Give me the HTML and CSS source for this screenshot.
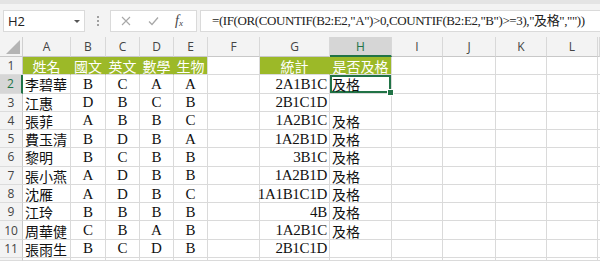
FILE: index.html
```html
<!DOCTYPE html>
<html lang="zh-Hant">
<head>
    <meta charset="UTF-8">
    <title>成績統計</title>
    <link rel="stylesheet" href="styles.css">
</head>
<body>
    <div class="top-band"></div>
    <div class="formula-bar">
        <div class="name-box">
            <span>H2</span>
            <span class="caret"></span>
        </div>
        <div class="grip"><i></i><i></i><i></i></div>
        <div class="fx-box">
            <svg class="fx-icon" width="10" height="10" viewBox="0 0 10 10">
                <path d="M1 1 L9 9 M9 1 L1 9" stroke="#a8a8a8" stroke-width="1.1" fill="none"/>
            </svg>
            <svg class="fx-icon" width="11" height="10" viewBox="0 0 11 10">
                <path d="M1 5.5 L4 8.5 L10 1.5" stroke="#a8a8a8" stroke-width="1.3" fill="none"/>
            </svg>
            <span class="fx">f<sub>x</sub></span>
        </div>
        <div class="formula">=(IF(OR(COUNTIF(B2:E2,"A")&gt;0,COUNTIF(B2:E2,"B")&gt;=3),"及格",""))</div>
    </div>

    <div id="sheet" class="sheet"></div>

    <script>
        const letters = ['A', 'B', 'C', 'D', 'E', 'F', 'G', 'H', 'I', 'J', 'K', 'L', ''];

        const rows = [
            ['姓名', '國文', '英文', '數學', '生物', '', '統計', '是否及格'],
            ['李碧華', 'B', 'C', 'A', 'A', '', '2A1B1C', '及格'],
            ['江惠', 'D', 'B', 'C', 'B', '', '2B1C1D', ''],
            ['張菲', 'A', 'B', 'B', 'C', '', '1A2B1C', '及格'],
            ['費玉清', 'B', 'D', 'B', 'A', '', '1A2B1D', '及格'],
            ['黎明', 'B', 'C', 'B', 'B', '', '3B1C', '及格'],
            ['張小燕', 'A', 'D', 'B', 'B', '', '1A2B1D', '及格'],
            ['沈雁', 'A', 'D', 'B', 'C', '', '1A1B1C1D', '及格'],
            ['江玲', 'B', 'B', 'B', 'B', '', '4B', '及格'],
            ['周華健', 'C', 'B', 'A', 'B', '', '1A2B1C', '及格'],
            ['張雨生', 'B', 'C', 'D', 'B', '', '2B1C1D', ''],
            ['', '', '', '', '', '', '', '']
        ];

        const sheet = document.getElementById('sheet');

        function addCell(text, className) {
            const div = document.createElement('div');
            div.className = className;
            div.textContent = text;
            sheet.appendChild(div);
            return div;
        }

        // column headers
        const corner = addCell('', 'corner');
        corner.innerHTML = '<span class="select-all"></span>';
        letters.forEach(l => {
            addCell(l, l === 'H' ? 'col-head selected' : 'col-head');
        });

        // data rows (the last one is only a sliver at the bottom edge)
        rows.forEach((row, r) => {
            const label = r < 11 ? r + 1 : '';
            addCell(label, r === 1 ? 'row-head selected' : 'row-head');
            letters.forEach((l, c) => {
                const text = row[c] || '';
                let cls = 'cell';
                if (r === 0) {
                    if (c <= 4 || c === 6 || c === 7) cls += ' title';
                    if (c === 4 || c === 7) cls += ' title-end';
                } else if (c === 0) {
                    cls += ' name';
                } else if (c >= 1 && c <= 4) {
                    cls += ' grade';
                } else if (c === 6) {
                    cls += ' stat';
                } else if (c === 7) {
                    cls += ' pass';
                }
                if (r === 1 && c === 7) cls += ' active';
                addCell(text, cls);
            });
        });
    </script>
</body>
</html>
```

FILE: styles.css
```css
body {
    margin: 0;
    background: #f3f3f3;
    font-family: "Liberation Serif", "Noto Sans CJK TC", serif;
    overflow: hidden;
}
.top-band {
    height: 4px;
    background: #e4e4e4;
}
.formula-bar {
    display: flex;
    height: 22px;
    padding: 6px 0 5px 3px;
    background: #f3f3f3;
}
.name-box {
    width: 82px;
    box-sizing: border-box;
    background: #fff;
    border: 1px solid #dadada;
    display: flex;
    align-items: center;
    justify-content: space-between;
    padding: 0 4px 0 4px;
    font-family: "Open Sans", sans-serif;
    font-size: 13px;
    color: #222;
}
.caret {
    width: 0;
    height: 0;
    border-left: 3px solid transparent;
    border-right: 3px solid transparent;
    border-top: 3px solid #555;
    margin-top: 1px;
}
.grip {
    width: 25px;
    display: flex;
    flex-direction: column;
    align-items: center;
    justify-content: center;
    gap: 2px;
}
.grip i {
    display: block;
    width: 2px;
    height: 2px;
    background: #a0a0a0;
}
.fx-box {
    width: 87px;
    box-sizing: border-box;
    background: #fff;
    border: 1px solid #dadada;
    display: flex;
    align-items: center;
    padding-left: 10px;
    gap: 17px;
}
.fx {
    font-family: "Liberation Serif", serif;
    font-style: italic;
    font-size: 14px;
    color: #444;
    margin-left: -1px;
}
.fx sub {
    font-size: 9px;
    vertical-align: -1px;
}
.formula {
    flex: 1;
    min-width: 0;
    margin-left: 3px;
    background: #fff;
    border: 1px solid #dadada;
    border-right: none;
    padding-left: 11px;
    font-size: 13px;
    letter-spacing: -0.4px;
    line-height: 20px;
    color: #222;
    white-space: nowrap;
    overflow: hidden;
}
.sheet {
    display: grid;
    grid-template-columns: 23px 48px 35px 34px 34px 34px 52px 70px 62px 51px 53px 51px 51px 2px;
    grid-template-rows: 20px repeat(11, 18.27px) 3px;
    background: #fff;
    overflow: hidden;
}
.corner {
    position: relative;
    background: #f3f3f3;
    border-right: 1px solid #d0d0d0;
    border-bottom: 1px solid #c8c8c8;
}
.select-all {
    position: absolute;
    right: 2px;
    bottom: 2px;
    width: 0;
    height: 0;
    border-left: 14px solid transparent;
    border-bottom: 14px solid #b4b4b4;
}
.col-head, .row-head {
    display: flex;
    align-items: center;
    justify-content: center;
    background: #f3f3f3;
    font-family: "Open Sans", sans-serif;
    font-size: 12px;
    color: #444;
    box-sizing: border-box;
    overflow: hidden;
}
.col-head {
    border-right: 1px solid #d8d8d8;
    border-bottom: 1px solid #c8c8c8;
}
.row-head {
    border-right: 1px solid #c8c8c8;
    border-bottom: 1px solid #dcdcdc;
}
.col-head.selected {
    background: #d6d6d6;
    color: #217346;
    border-bottom: 2px solid #217346;
}
.row-head.selected {
    background: #d6d6d6;
    color: #217346;
    border-right: 2px solid #217346;
}
.cell {
    box-sizing: border-box;
    border-right: 1px solid #dadada;
    border-bottom: 1px solid #dadada;
    display: flex;
    align-items: center;
    padding: 1px 2px 0;
    font-size: 15px;
    color: #111;
    white-space: nowrap;
}
.title {
    background: #9cb928;
    border-right-color: #9cb928;
    color: #fff;
    font-size: 14px;
    justify-content: center;
}
.title-end {
    border-right-color: #dadada;
}
.name, .pass {
    font-size: 14px;
}
.grade {
    justify-content: center;
}
.stat {
    justify-content: flex-end;
    letter-spacing: -0.3px;
}
.active {
    position: relative;
    box-shadow: inset 0 0 0 2px #217346;
}
.active::after {
    content: "";
    position: absolute;
    right: -3px;
    bottom: -3px;
    width: 5px;
    height: 5px;
    background: #217346;
    border: 1px solid #fff;
}
```
